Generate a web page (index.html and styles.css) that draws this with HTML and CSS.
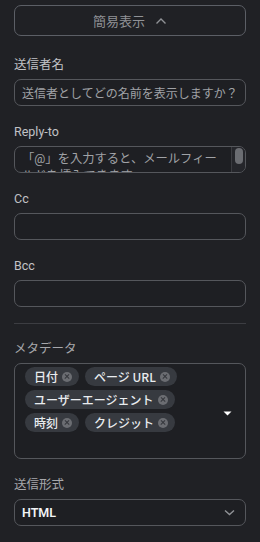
FILE: index.html
```html
<!DOCTYPE html>
<html lang="ja">
<head>
    <meta charset="UTF-8">
    <meta name="viewport" content="width=device-width, initial-scale=1.0">
    <title>送信設定</title>
    <link rel="stylesheet" href="styles.css">
</head>
<body>
    <div class="panel">
        <button class="toggle-btn">
            <span>簡易表示</span>
            <svg width="12" height="8" viewBox="0 0 12 8"><path d="M1.5 6.5 L6 2 L10.5 6.5" fill="none" stroke="#909296" stroke-width="1.4"/></svg>
        </button>

        <div class="field first">
            <label class="field-label">送信者名</label>
            <div class="input"><span class="placeholder">送信者としてどの名前を表示しますか？</span></div>
        </div>

        <div class="field">
            <label class="field-label">Reply-to</label>
            <div class="textarea">
                <div class="textarea-text">「@」を入力すると、メールフィールドを挿入できます</div>
                <div class="scrollbar"><div class="thumb"></div></div>
            </div>
        </div>

        <div class="field">
            <label class="field-label">Cc</label>
            <div class="input"></div>
        </div>

        <div class="field">
            <label class="field-label">Bcc</label>
            <div class="input"></div>
        </div>

        <div class="divider"></div>

        <div class="field meta">
            <label class="field-label">メタデータ</label>
            <div class="multiselect">
                <div class="chips">
                    <span class="chip">日付<i class="chip-x"></i></span>
                    <span class="chip">ページ URL<i class="chip-x"></i></span>
                    <span class="chip">ユーザーエージェント<i class="chip-x"></i></span>
                    <span class="chip">時刻<i class="chip-x"></i></span>
                    <span class="chip">クレジット<i class="chip-x"></i></span>
                </div>
                <svg class="caret" width="9" height="5" viewBox="0 0 9 5"><path d="M0.5 0.5 H8.5 L4.5 4.5 Z" fill="#ffffff"/></svg>
            </div>
        </div>

        <div class="field format">
            <label class="field-label">送信形式</label>
            <div class="input select">
                <span class="value">HTML</span>
                <svg width="11" height="7" viewBox="0 0 11 7"><path d="M1 1.5 L5.5 5.5 L10 1.5" fill="none" stroke="#909296" stroke-width="1.4"/></svg>
            </div>
        </div>
    </div>
</body>
</html>
```

FILE: styles.css
```css
body {
    margin: 0;
    padding: 0;
    background-color: #202125;
    font-family: Roboto, "Noto Sans CJK JP", sans-serif;
    color: #c1c2c5;
}
.panel {
    display: flex;
    flex-direction: column;
    padding: 5px 14px 0;
}
.toggle-btn {
    display: flex;
    align-items: center;
    justify-content: center;
    gap: 10px;
    height: 31px;
    background: transparent;
    border: 1px solid #5c5f66;
    border-radius: 7px;
    color: #909296;
    font-family: "Noto Sans CJK JP", sans-serif;
    font-size: 13px;
    padding: 0;
}
.field {
    display: flex;
    flex-direction: column;
    margin-top: 17px;
}
.field.first {
    margin-top: 20px;
}
.field.meta {
    margin-top: 16px;
}
.field-label {
    font-size: 12.5px;
    line-height: 18px;
    margin-bottom: 5px;
    color: #c1c2c5;
}
.field.meta .field-label,
.field.format .field-label {
    color: #a6a7ab;
}
.input {
    box-sizing: border-box;
    height: 27px;
    border: 1px solid #55575c;
    border-radius: 7px;
    background-color: #1e1f23;
    display: flex;
    align-items: center;
    padding: 0 7px;
    overflow: hidden;
}
.placeholder {
    font-size: 12px;
    color: #a0a2a6;
    white-space: nowrap;
}
.textarea {
    box-sizing: border-box;
    height: 27px;
    border: 1px solid #55575c;
    border-radius: 7px;
    background-color: #1e1f23;
    display: flex;
    overflow: hidden;
}
.textarea-text {
    flex: 1;
    padding: 4px 8px 0 7px;
    font-size: 12.3px;
    line-height: 17px;
    color: #a0a2a6;
}
.scrollbar {
    width: 13px;
    border-left: 1px solid #3a3b40;
    background-color: #25262b;
    display: flex;
    justify-content: center;
    padding-top: 1px;
}
.thumb {
    width: 8px;
    height: 16px;
    border-radius: 4px;
    background-color: #6b6d72;
}
.divider {
    height: 1px;
    background-color: #3c3d42;
    margin-top: 16px;
}
.multiselect {
    box-sizing: border-box;
    height: 96px;
    border: 1px solid #55575c;
    border-radius: 7px;
    background-color: #1e1f23;
    display: flex;
    align-items: center;
    padding: 3px 13px 0 10px;
}
.chips {
    flex: 1;
    align-self: flex-start;
    display: flex;
    flex-wrap: wrap;
    gap: 4px 6px;
    max-width: 165px;
}
.chip {
    display: inline-flex;
    align-items: center;
    height: 19px;
    padding: 0 7px 0 9px;
    border-radius: 10px;
    background-color: #373a40;
    color: #e9ecef;
    font-family: "Noto Sans CJK JP", sans-serif;
    font-size: 12px;
    font-weight: 500;
}
.chip-x {
    display: inline-block;
    width: 10px;
    height: 10px;
    margin-left: 4px;
    border-radius: 50%;
    background: #6b6d72;
    position: relative;
}
.chip-x::before,
.chip-x::after {
    content: "";
    position: absolute;
    left: 2px;
    top: 4.4px;
    width: 6px;
    height: 1.3px;
    background: #35373c;
    transform: rotate(45deg);
}
.chip-x::after {
    transform: rotate(-45deg);
}
.caret {
    margin-left: auto;
    margin-top: 2px;
}
.select {
    justify-content: space-between;
    padding: 0 10px 0 7px;
}
.value {
    font-size: 12.5px;
    font-weight: 600;
    color: #f1f3f5;
}
```
